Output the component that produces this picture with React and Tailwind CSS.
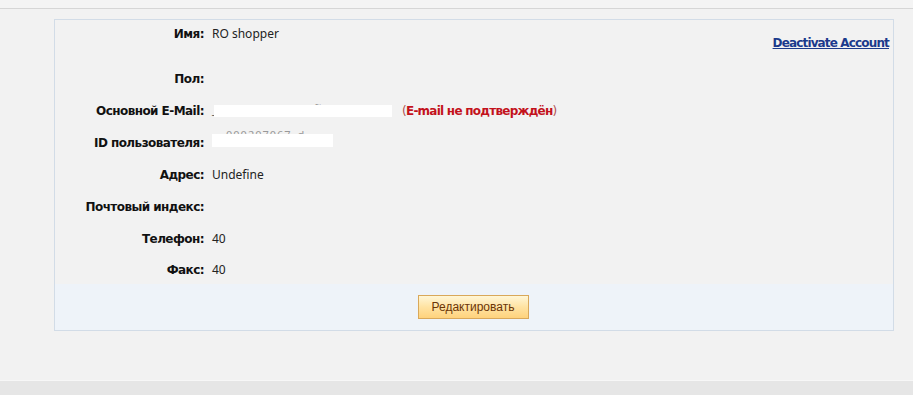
import React from 'react';

const labelCls = "w-[149px] shrink-0 text-right font-bold text-[12px] text-[#111] font-['DejaVu_Sans',sans-serif] tracking-[-0.55px]";
const valueCls = "pl-[8px] text-[12px] text-[#222] font-['Noto_Sans',sans-serif]";

const Row = ({ label, children, h = 'h-[32px]' }) => (
  <div className={`flex items-center ${h}`}>
    <div className={labelCls}>{label}</div>
    <div className={`${valueCls} flex items-center`}>{children}</div>
  </div>
);

const App = () => {
  return (
    <div className="w-[913px] h-[395px] bg-[#f2f2f2] flex flex-col overflow-hidden">
      {/* top strip */}
      <div className="h-[8px] bg-[#f4f4f4]" />
      <div className="h-[1px] bg-[#d6d6d6]" />
      <div className="h-[10px]" />

      {/* profile card */}
      <div className="ml-[54px] w-[840px] h-[312px] border border-[#d2dce7] flex flex-col">
        <div className="flex flex-1">
          <div className="flex-1 flex flex-col">
            <Row label="Имя:" h="h-[28px]">RO shopper</Row>
            <div className="h-[15px]" />
            <Row label="Пол:" />
            <Row label="Основной E-Mail:">
              <span className="relative inline-block w-[180px] h-[14px]">
                <span className="absolute left-[30px] top-[-7px] text-[#999] text-[11px] tracking-[2px]">-  -  - -   - -  -  ~ -   -   --</span>
                <span className="absolute left-0 top-[-3px] text-[#555]">_</span>
                <span className="absolute left-[2px] top-[1px] w-[178px] h-[12px] bg-white" />
              </span>
              <span className="ml-[10px] font-bold text-[#c3121c] font-['DejaVu_Sans',sans-serif] tracking-[-0.75px]">
                <span className="font-normal text-[#b05050]">(</span>E-mail не подтверждён<span className="font-normal text-[#b05050]">)</span>
              </span>
            </Row>
            <Row label="ID пользователя:">
              <span className="relative inline-block w-[121px] h-[14px]">
                <span className="absolute left-[14px] top-[-9px] text-[#999] text-[11px] tracking-[1px]">000207067_d_</span>
                <span className="absolute left-0 top-[-2px] w-[121px] h-[13px] bg-white" />
              </span>
            </Row>
            <Row label="Адрес:">Undefine</Row>
            <Row label="Почтовый индекс:" />
            <Row label="Телефон:">40</Row>
            <Row label="Факс:" h="h-[29px]">40</Row>
          </div>
          <div className="pt-[9px] pr-[4px]">
            <a href="#" className="text-[12px] font-bold text-[#1b3a8c] underline font-['DejaVu_Sans',sans-serif] tracking-[-0.85px]">
              Deactivate Account
            </a>
          </div>
        </div>

        {/* footer with edit button */}
        <div className="h-[46px] bg-[#eef3f9] flex items-center justify-center pr-[2px]">
          <button className="w-[111px] h-[24px] border border-[#d9a85a] bg-gradient-to-b from-[#fff6d6] via-[#ffe3a2] to-[#ffd27c] text-[12px] text-[#6b3507] font-['Liberation_Sans',sans-serif]">
            Редактировать
          </button>
        </div>
      </div>

      <div className="flex-1" />
      {/* bottom bar */}
      <div className="h-[1px] bg-[#f7f7f7]" />
      <div className="h-[14px] bg-[#e6e6e6]" />
    </div>
  );
};

export default App;
